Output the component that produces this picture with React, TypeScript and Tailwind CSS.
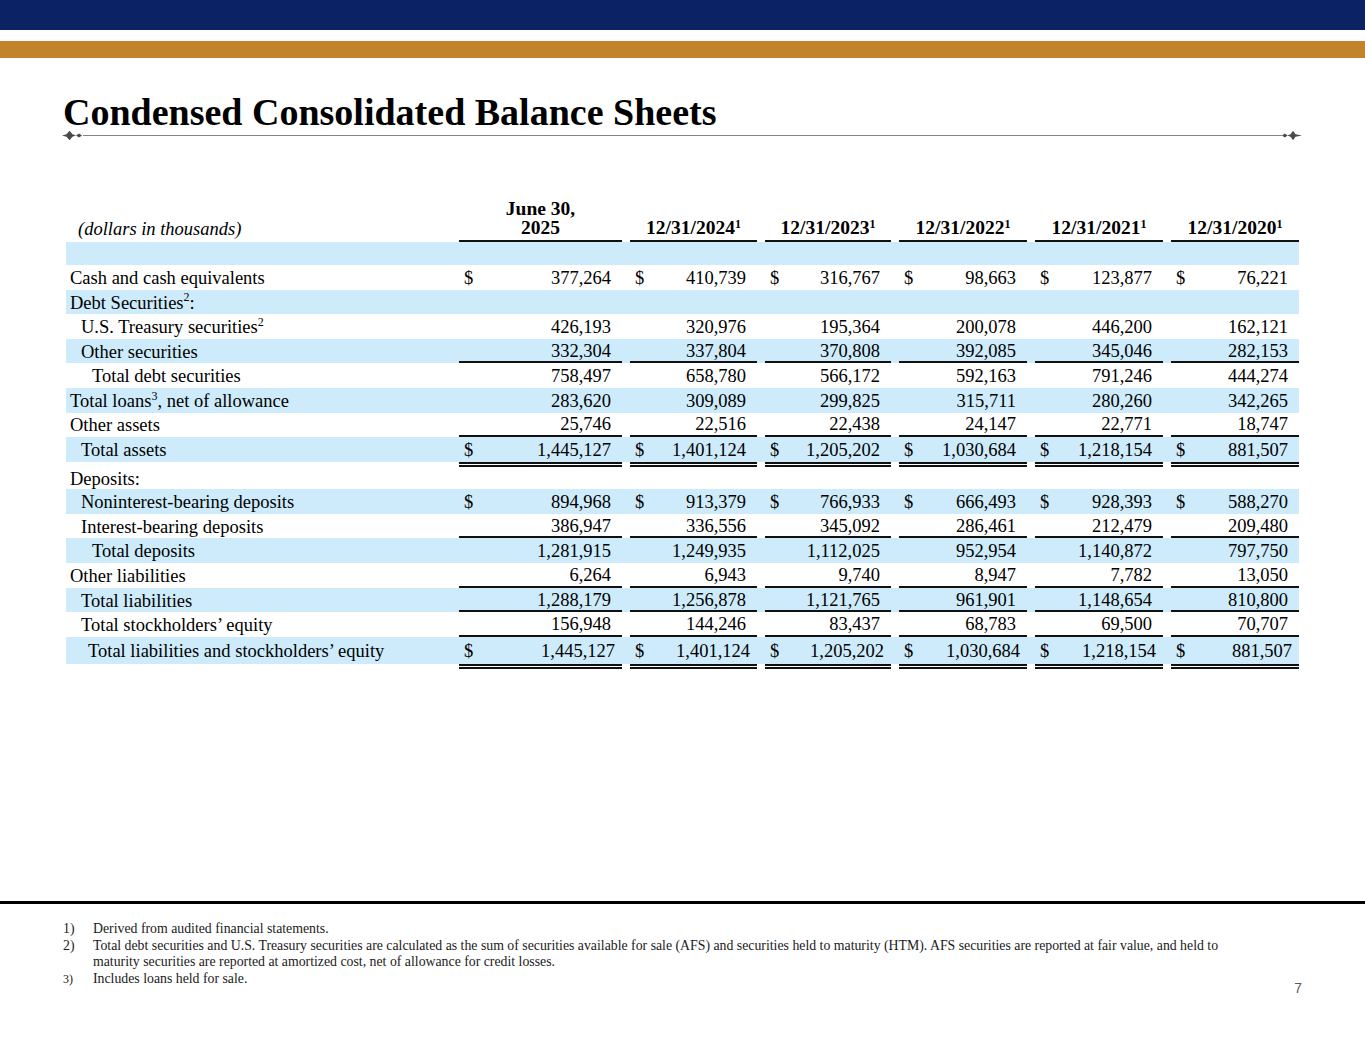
import type { ReactNode } from 'react';

const colW = ['w-[163px]', 'w-[127px]', 'w-[126px]', 'w-[128px]', 'w-[128px]', 'w-[128px]'];
const years = ['12/31/2024', '12/31/2023', '12/31/2022', '12/31/2021', '12/31/2020'];

type Row = {
  label: ReactNode;
  pad: string;
  blue?: boolean;
  dollar?: boolean;
  values?: string[];
  line?: 'single' | 'double';
  h?: string;
  pr?: string;
};

const totalAssets = ['1,445,127', '1,401,124', '1,205,202', '1,030,684', '1,218,154', '881,507'];

const rows: Row[] = [
  { label: 'Cash and cash equivalents', pad: 'pl-[4px]', dollar: true, values: ['377,264', '410,739', '316,767', '98,663', '123,877', '76,221'] },
  { label: <>Debt Securities<sup className="text-[12px]">2</sup>:</>, pad: 'pl-[4px]', blue: true },
  { label: <>U.S. Treasury securities<sup className="text-[12px]">2</sup></>, pad: 'pl-[15px]', values: ['426,193', '320,976', '195,364', '200,078', '446,200', '162,121'] },
  { label: 'Other securities', pad: 'pl-[15px]', blue: true, line: 'single', values: ['332,304', '337,804', '370,808', '392,085', '345,046', '282,153'] },
  { label: 'Total debt securities', pad: 'pl-[26px]', values: ['758,497', '658,780', '566,172', '592,163', '791,246', '444,274'] },
  { label: <>Total loans<sup className="text-[12px]">3</sup>, net of allowance</>, pad: 'pl-[4px]', blue: true, values: ['283,620', '309,089', '299,825', '315,711', '280,260', '342,265'] },
  { label: 'Other assets', pad: 'pl-[4px]', line: 'single', values: ['25,746', '22,516', '22,438', '24,147', '22,771', '18,747'] },
  { label: 'Total assets', pad: 'pl-[15px]', blue: true, dollar: true, line: 'double', values: totalAssets },
  { label: 'Deposits:', pad: 'pl-[4px]', h: 'h-[22.5px]' },
  { label: 'Noninterest-bearing deposits', pad: 'pl-[15px]', blue: true, dollar: true, values: ['894,968', '913,379', '766,933', '666,493', '928,393', '588,270'] },
  { label: 'Interest-bearing deposits', pad: 'pl-[15px]', line: 'single', values: ['386,947', '336,556', '345,092', '286,461', '212,479', '209,480'] },
  { label: 'Total deposits', pad: 'pl-[26px]', blue: true, values: ['1,281,915', '1,249,935', '1,112,025', '952,954', '1,140,872', '797,750'] },
  { label: 'Other liabilities', pad: 'pl-[4px]', line: 'single', values: ['6,264', '6,943', '9,740', '8,947', '7,782', '13,050'] },
  { label: 'Total liabilities', pad: 'pl-[15px]', blue: true, line: 'single', values: ['1,288,179', '1,256,878', '1,121,765', '961,901', '1,148,654', '810,800'] },
  { label: 'Total stockholders’ equity', pad: 'pl-[15px]', line: 'single', values: ['156,948', '144,246', '83,437', '68,783', '69,500', '70,707'] },
  { label: 'Total liabilities and stockholders’ equity', pad: 'pl-[22px]', blue: true, dollar: true, line: 'double', values: totalAssets, h: 'h-[27px]', pr: 'pr-[7px]' },
];

function LeftOrnament() {
  return (
    <svg width="21" height="11" viewBox="0 0 21 11" className="shrink-0">
      <path d="M0 5.5 L4.5 4.3 L7.5 0.8 L10.5 4.3 L14 5.5 L10.5 6.7 L7.5 10.2 L4.5 6.7 Z" fill="#4a4a4a" />
      <path d="M14 5.5 L17 3.4 L20 5.5 L17 7.6 Z" fill="#4a4a4a" />
    </svg>
  );
}

function RightOrnament() {
  return (
    <svg width="20" height="11" viewBox="0 0 20 11" className="shrink-0">
      <path d="M0 5.5 L2.8 3.5 L5.6 5.5 L2.8 7.5 Z" fill="#4a4a4a" />
      <path d="M5.2 5.5 L8.5 4.2 L11 0.8 L13.5 4.2 L20 5.5 L13.5 6.8 L11 10.2 L8.5 6.8 Z" fill="#4a4a4a" />
    </svg>
  );
}

function DoubleLine() {
  return (
    <div className="flex gap-2 h-[5px]">
      <div className="w-[385px]" />
      {colW.map((w, i) => (
        <div key={i} className={`${w} border-y-2 border-[#111]`} />
      ))}
    </div>
  );
}

export default function App() {
  return (
    <div className="w-[1365px] h-[1055px] bg-white flex flex-col overflow-hidden text-black font-['Liberation_Serif','Times_New_Roman',serif]">
      <div className="h-[30px] bg-[#0b2265]" />
      <div className="h-[11px]" />
      <div className="h-[17px] bg-[#c3832a]" />

      <h1 className="mt-[35px] ml-[63px] text-[38px] leading-[38px] font-bold">
        Condensed Consolidated Balance Sheets
      </h1>

      <div className="ml-[62px] mr-[63px] h-[9px] flex items-center">
        <LeftOrnament />
        <div className="flex-1 h-[1.5px] bg-[#858585]" />
        <RightOrnament />
      </div>

      <div className="mt-[60px] ml-[66px] w-[1233px] text-[18.5px]">
        <div className="flex gap-2 h-[42px] items-end">
          <div className="w-[385px] pl-[12px] pb-[4px] leading-[18px] italic">(dollars in thousands)</div>
          <div className={`${colW[0]} h-full flex flex-col justify-end items-center pb-[3px] leading-[19px] text-[19.5px] font-bold border-b-2 border-[#111]`}>
            <span>June 30,</span>
            <span>2025</span>
          </div>
          {years.map((y, i) => (
            <div
              key={y}
              className={`${colW[i + 1]} h-full flex flex-col justify-end items-center pb-[3px] leading-[19px] text-[19.5px] font-bold border-b-2 border-[#111]`}
            >
              <span>
                {y}
                <sup className="text-[12px]">1</sup>
              </span>
            </div>
          ))}
        </div>

        <div className="h-[23px] bg-[#cdebfa]" />

        {rows.map((r, idx) => (
          <div key={idx}>
            <div className={`flex gap-2 ${r.h ?? 'h-[24.6px]'} ${r.blue ? 'bg-[#cdebfa]' : ''}`}>
              <div className={`w-[385px] pt-[3px] flex items-center whitespace-nowrap ${r.pad}`}>{r.label}</div>
              {colW.map((w, i) => (
                <div
                  key={i}
                  className={`${w} h-full pt-[3px] flex items-center justify-between pl-[5px] ${r.pr ?? 'pr-[11px]'} ${
                    r.line === 'single' ? 'border-b-2 border-[#111]' : ''
                  }`}
                >
                  <span>{r.dollar ? '$' : ''}</span>
                  <span>{r.values ? r.values[i] : ''}</span>
                </div>
              ))}
            </div>
            {r.line === 'double' && <DoubleLine />}
          </div>
        ))}
      </div>

      <div className="mt-auto h-[154px] flex flex-col">
        <div className="h-[3px] bg-black" />
        <div className="flex">
          <div className="ml-[63px] mt-[17px] flex-1 text-[13.8px] leading-[16.5px] text-[#1a1a1a]">
            <div className="flex">
              <span className="w-[30px] shrink-0">1)</span>
              <span>Derived from audited financial statements.</span>
            </div>
            <div className="flex">
              <span className="w-[30px] shrink-0">2)</span>
              <span className="whitespace-nowrap">
                Total debt securities and U.S. Treasury securities are calculated as the sum of securities available for sale (AFS) and securities held to maturity (HTM). AFS securities are reported at fair value, and held to
                <br />
                maturity securities are reported at amortized cost, net of allowance for credit losses.
              </span>
            </div>
            <div className="flex">
              <span className="w-[30px] shrink-0 text-[12px]">3)</span>
              <span>Includes loans held for sale.</span>
            </div>
          </div>
          <div className="mt-[76px] mr-[63px] text-[14px] leading-[16px] text-[#595959] font-['Liberation_Sans',Arial,sans-serif]">
            7
          </div>
        </div>
      </div>
    </div>
  );
}
